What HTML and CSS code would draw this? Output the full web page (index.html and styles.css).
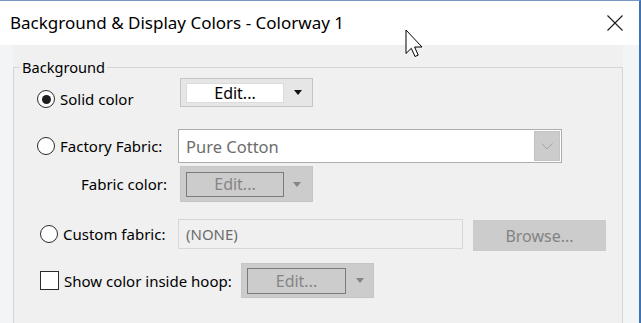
FILE: index.html
```html
<!DOCTYPE html>
<html>
<head>
<meta charset="utf-8">
<title>Background &amp; Display Colors</title>
<link rel="stylesheet" href="styles.css">
</head>
<body>
<div class="window">
  <div class="titlebar">
    <span class="title">Background &amp; Display Colors - Colorway 1</span>
    <svg class="close" width="16" height="16" viewBox="0 0 16 16"><path d="M0.5 0.5 L15.5 15.5 M15.5 0.5 L0.5 15.5" stroke="#1a1a1a" stroke-width="1.1" fill="none"/></svg>
  </div>
  <div class="content">
    <div class="panel">
      <fieldset class="group">
        <legend>Background</legend>

        <div class="row r1">
          <label class="opt o1"><span class="radio checked"></span><span>Solid color</span></label>
          <div class="split split-on s1">
            <span class="btn">Edit...</span>
            <span class="caret-box"><span class="caret"></span></span>
          </div>
        </div>

        <div class="row r2">
          <label class="opt o2"><span class="radio"></span><span>Factory Fabric:</span></label>
          <div class="combo">
            <span class="combo-text">Pure Cotton</span>
            <span class="combo-drop"><svg width="12" height="7" viewBox="0 0 12 7"><path d="M0.5 0.5 L6 6 L11.5 0.5" stroke="#a3a3a3" stroke-width="1" fill="none"/></svg></span>
          </div>
        </div>

        <div class="row r3">
          <span class="opt o3">Fabric color:</span>
          <div class="split split-off s3">
            <span class="btn">Edit...</span>
            <span class="caret-box"><span class="caret"></span></span>
          </div>
        </div>

        <div class="row r4">
          <label class="opt o4"><span class="radio"></span><span>Custom fabric:</span></label>
          <div class="field">(NONE)</div>
          <div class="browse">Browse...</div>
        </div>

        <div class="row r5">
          <label class="opt o5"><span class="check"></span><span>Show color inside hoop:</span></label>
          <div class="split split-off s5">
            <span class="btn">Edit...</span>
            <span class="caret-box"><span class="caret"></span></span>
          </div>
        </div>
      </fieldset>
    </div>
  </div>
  <svg class="cursor" width="20" height="30" viewBox="0 0 20 30"><path d="M1 1 L1 24.5 L6.3 19.3 L10 27.5 L13.2 26.1 L9.6 18 L17 18 Z" fill="#fff" stroke="#000" stroke-width="1" stroke-linejoin="miter"/></svg>
</div>
</body>
</html>
```
FILE: styles.css
```css
* { box-sizing: border-box; }
html, body { margin: 0; padding: 0; }
body {
  width: 641px;
  height: 323px;
  overflow: hidden;
  font-family: "Noto Sans", "Segoe UI", sans-serif;
  font-size: 15px;
  color: #000;
  background: #f3f4f6;
}
.window {
  position: relative;
  width: 641px;
  height: 323px;
  border-top: 1px solid #7497c3;
  border-right: 2px solid #3f72b3;
  background: #f3f4f6;
  overflow: hidden;
}
.titlebar {
  height: 44px;
  background: #fff;
  display: flex;
  align-items: center;
  justify-content: space-between;
  padding: 0 16px 0 10px;
}
.title {
  font-size: 17px;
  line-height: 22px;
  color: #000;
}
.close { display: block; }

.content {
  display: flex;
  padding: 0 16px 0 13px;
  height: 278px;
}
.panel {
  flex: 1;
  background: #f0f0f0;
  padding-top: 12px;
}
.group {
  margin: 0;
  padding: 0;
  border: 1px solid #d6d6d6;
  height: 300px;
  min-width: 0;
}
.group legend {
  font-size: 14.6px;
  line-height: 20px;
  padding: 0 2px;
  margin-left: 6px;
}

.row {
  display: flex;
  align-items: center;
}
.opt {
  display: flex;
  align-items: center;
  gap: 5px;
  line-height: 20px;
  white-space: nowrap;
}
.radio {
  width: 18px;
  height: 18px;
  border: 1px solid #2b2b2b;
  border-radius: 50%;
  background: #fff;
  display: flex;
  align-items: center;
  justify-content: center;
  flex: none;
}
.radio.checked::after {
  content: "";
  width: 9px;
  height: 9px;
  border-radius: 50%;
  background: #1e1e1e;
}
.check {
  width: 19px;
  height: 19px;
  border: 1px solid #2b2b2b;
  background: #fff;
  flex: none;
}

/* rows */
.r1 { margin-top: 1px; height: 29px; align-items: flex-start; }
.o1 { width: 166px; padding-left: 23px; margin-top: 11px; }
.r2 { margin-top: 22px; height: 34px; }
.o2 { width: 164px; padding-left: 23px; }
.r3 { margin-top: 3px; height: 36px; }
.o3 { width: 165px; padding-left: 67px; }
.r4 { margin-top: 17px; height: 32px; align-items: flex-start; }
.o4 { width: 164px; padding-left: 26px; margin-top: 5px; }
.r5 { margin-top: 12px; height: 35px; }
.o5 { width: 227px; padding-left: 26px; }

/* split edit buttons */
.split {
  display: flex;
  align-items: center;
  width: 133px;
  padding-left: 5px;
  border: 1px solid #c4c4c4;
}
.split .btn {
  width: 98px;
  display: flex;
  align-items: center;
  justify-content: center;
  font-size: 16px;
  line-height: 20px;
}
.caret-box {
  flex: 1;
  display: flex;
  justify-content: center;
  align-items: center;
}
.caret {
  width: 0;
  height: 0;
  border-left: 4.5px solid transparent;
  border-right: 4.5px solid transparent;
  border-top: 5px solid #111;
}
.split-on {
  height: 29px;
  background: #e6e6e6;
}
.split-on .btn {
  height: 20px;
  background: #fff;
  border: 1px solid #dcdcdc;
  margin-left: 0;
}
.split-off {
  background: #cccccc;
  border-color: #c6c6c6;
}
.split-off .btn {
  background: #cccccc;
  border: 1px solid #7a7a7a;
  color: #858585;
}
.split-off .caret { border-top-color: #858585; }
.s3 { height: 36px; margin-left: 1px; }
.s3 .btn { height: 25px; }
.s3 .caret-box { padding-right: 2px; }
.s5 { height: 35px; }
.s5 .btn { height: 26px; width: 99px; }

/* combo */
.combo {
  width: 384px;
  height: 34px;
  background: #fff;
  border: 1px solid #adadad;
  display: flex;
  align-items: center;
  justify-content: space-between;
  padding: 1px;
}
.combo-text {
  font-size: 16.5px;
  color: #6d6d6d;
  padding-left: 6px;
}
.combo-drop {
  width: 26px;
  height: 100%;
  background: #cccccc;
  border: 1px solid #c3c3c3;
  display: flex;
  align-items: center;
  justify-content: center;
}
.combo-drop svg { display: block; }

/* custom fabric */
.field {
  width: 285px;
  height: 30px;
  border: 1px solid #d7d7d7;
  background: #f0f0f0;
  color: #6d6d6d;
  padding-left: 7px;
  display: flex;
  align-items: center;
}
.browse {
  width: 133px;
  height: 31px;
  margin-left: 10px;
  margin-top: 1px;
  background: #cccccc;
  border: 1px solid #cccccc;
  color: #838383;
  font-size: 16px;
  display: flex;
  align-items: center;
  justify-content: center;
}

.cursor {
  position: absolute;
  left: 405px;
  top: 28px;
}
```
